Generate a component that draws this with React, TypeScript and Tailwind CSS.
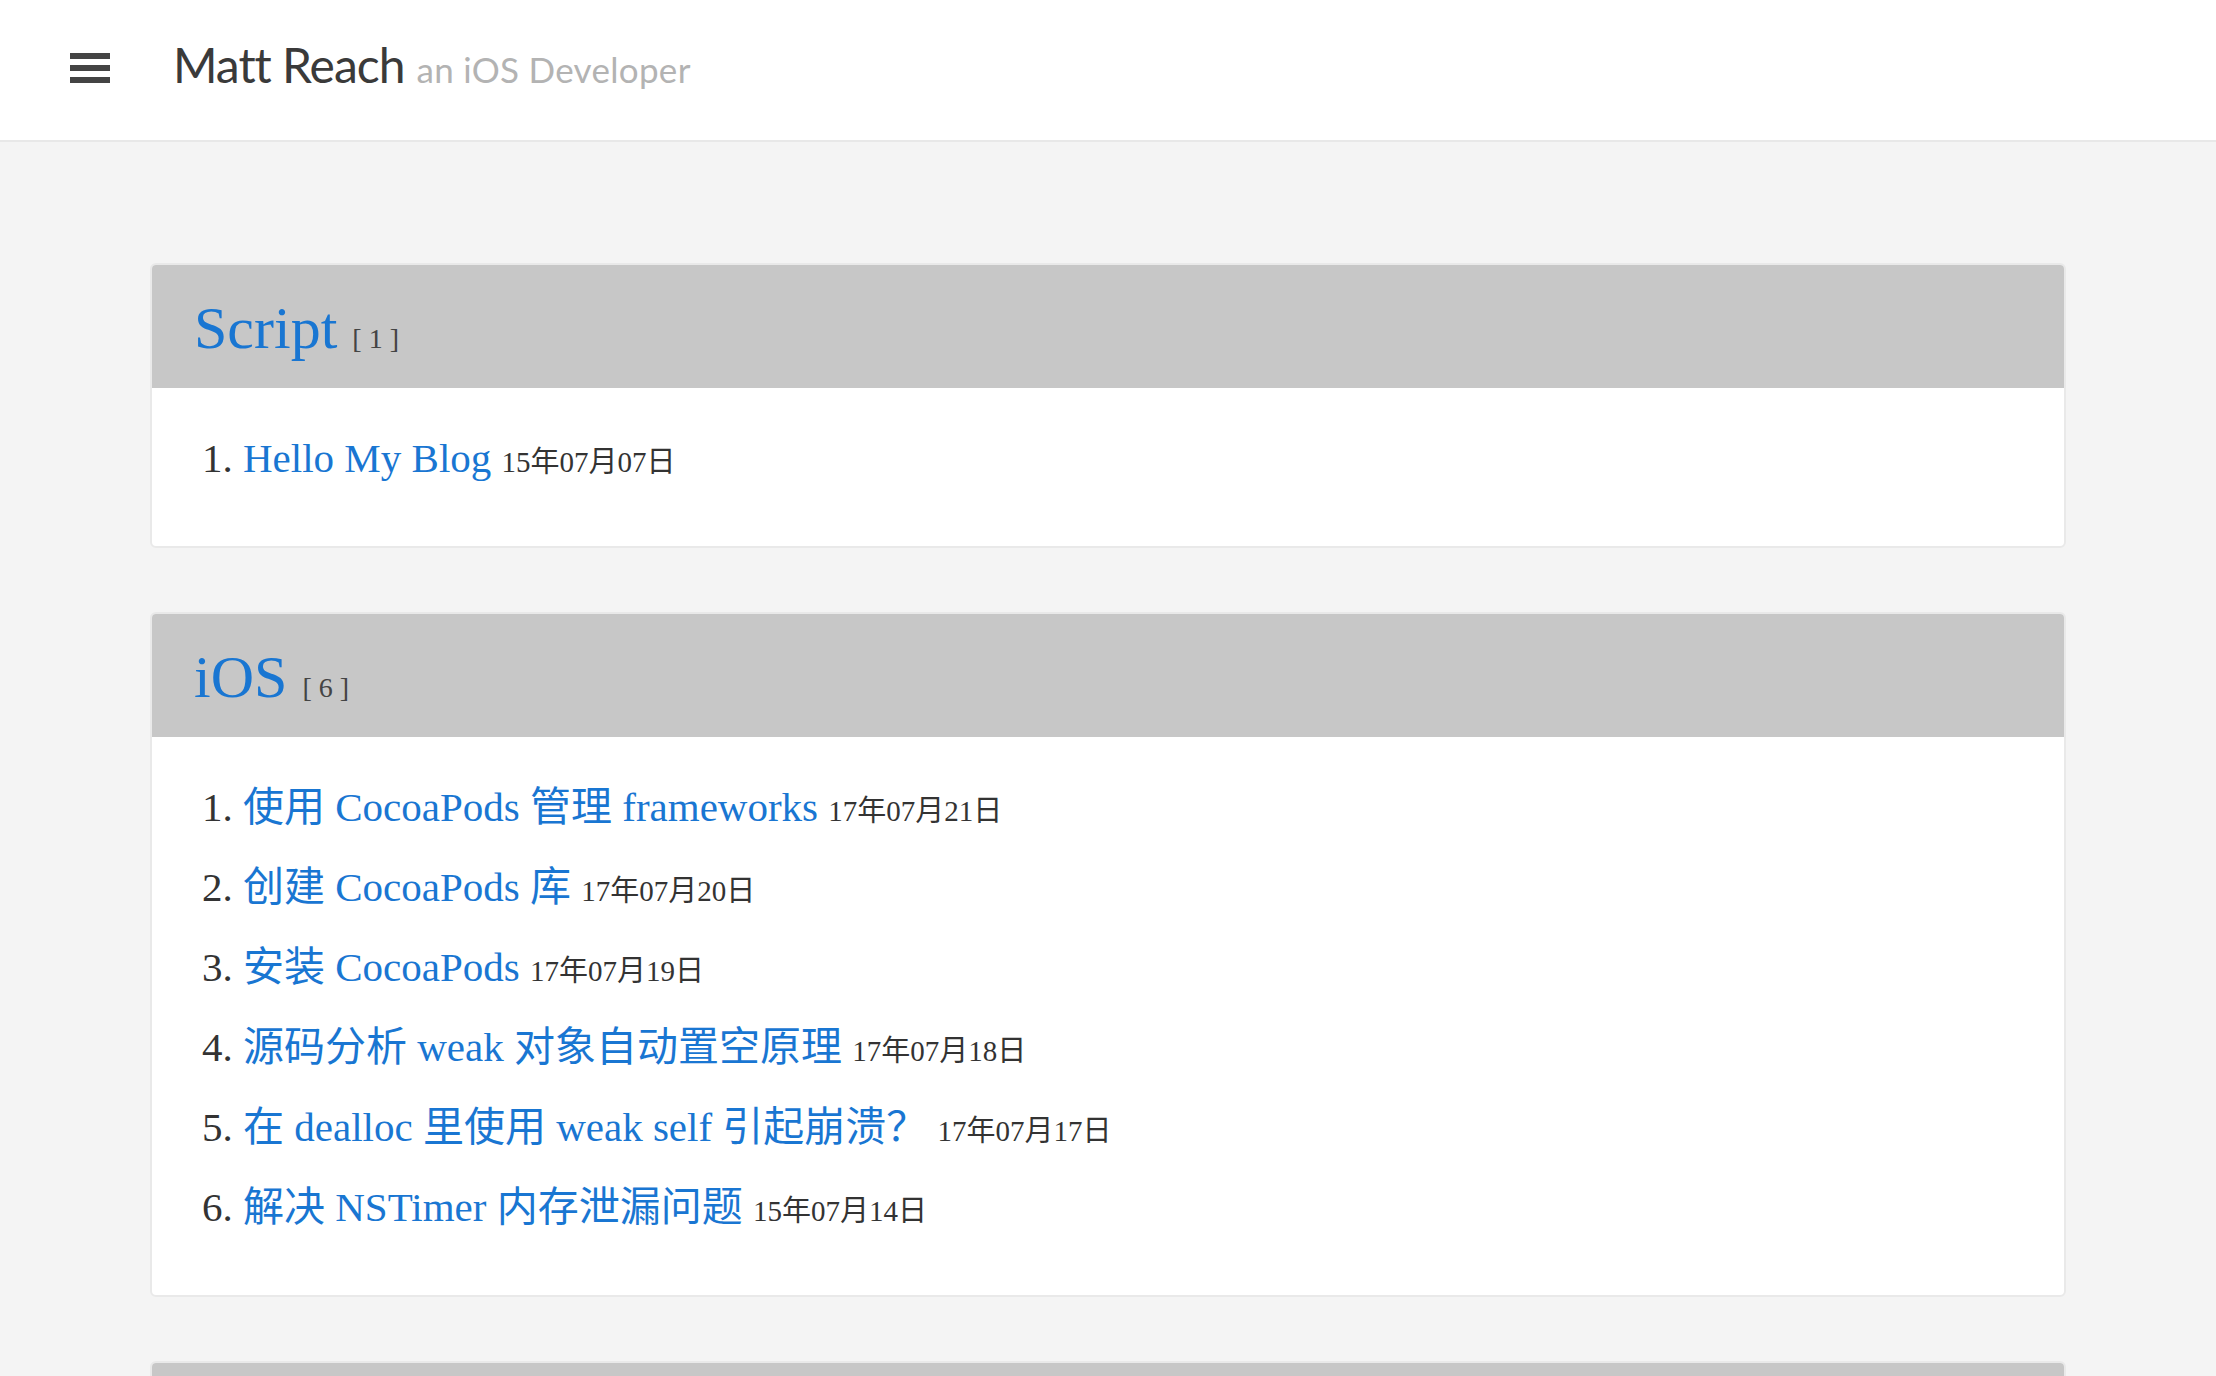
const categorias = [
  {
    nombre: "Script",
    posts: [{ titulo: "Hello My Blog", fecha: "15年07月07日" }],
  },
  {
    nombre: "iOS",
    posts: [
      { titulo: "使用 CocoaPods 管理 frameworks", fecha: "17年07月21日" },
      { titulo: "创建 CocoaPods 库", fecha: "17年07月20日" },
      { titulo: "安装 CocoaPods", fecha: "17年07月19日" },
      { titulo: "源码分析 weak 对象自动置空原理", fecha: "17年07月18日" },
      { titulo: "在 dealloc 里使用 weak self 引起崩溃？", fecha: "17年07月17日" },
      { titulo: "解决 NSTimer 内存泄漏问题", fecha: "15年07月14日" },
    ],
  },
  {
    nombre: "Objective-C",
    posts: [{ titulo: "Runtime 消息转发", fecha: "15年07月10日" }],
  },
];

function Navbar() {
  return (
    <header className="h-[142px] bg-white border-b-2 border-[#e8e8e8] flex items-start pl-[70px]">
      <button className="mt-[53px] w-[40px] flex flex-col gap-[6px]">
        <span className="block h-[6px] bg-[#444]" />
        <span className="block h-[6px] bg-[#444]" />
        <span className="block h-[6px] bg-[#444]" />
      </button>
      <div className="ml-[63px] mt-[41px] flex items-baseline gap-[12px] leading-none font-['Lato','Noto_Sans',sans-serif]">
        <span className="text-[48px] text-[#3a3a3a] tracking-[-1px]">Matt Reach</span>
        <span className="text-[35px] text-[#b3b3b3] tracking-[0.3px]">an iOS Developer</span>
      </div>
    </header>
  );
}

function Categoria({ nombre, posts }: { nombre: string; posts: { titulo: string; fecha: string }[] }) {
  return (
    <section className="bg-white border-2 border-[#e9e9e9] rounded-md overflow-hidden">
      <div className="h-[123px] bg-[#c7c7c7] pl-[42px] pt-[33px] leading-none text-[60px]">
        <span className="text-[#1976d2]">{nombre}</span>{" "}
        <span className="text-[28px] text-[#444]">[ {posts.length} ]</span>
      </div>
      <ol className="pl-[50px] pt-[30px] pb-[48px] text-[41px]">
        {posts.map((p, i) => (
          <li key={p.titulo} className="h-[80px] leading-[80px] whitespace-nowrap">
            <span className="text-[#333]">{i + 1}.</span>{" "}
            <a href="#" className="text-[#1976d2]">
              {p.titulo}
            </a>{" "}
            <span className="text-[29px] text-[#333]">{p.fecha}</span>
          </li>
        ))}
      </ol>
    </section>
  );
}

export default function App() {
  return (
    <div className="min-h-screen bg-[#f4f4f4] font-['Liberation_Serif','Noto_Sans_CJK_SC',serif]">
      <Navbar />
      <main className="w-[1916px] mx-auto pt-[121px] pb-[64px] flex flex-col gap-[64px]">
        {categorias.map((c) => (
          <Categoria key={c.nombre} nombre={c.nombre} posts={c.posts} />
        ))}
      </main>
    </div>
  );
}
